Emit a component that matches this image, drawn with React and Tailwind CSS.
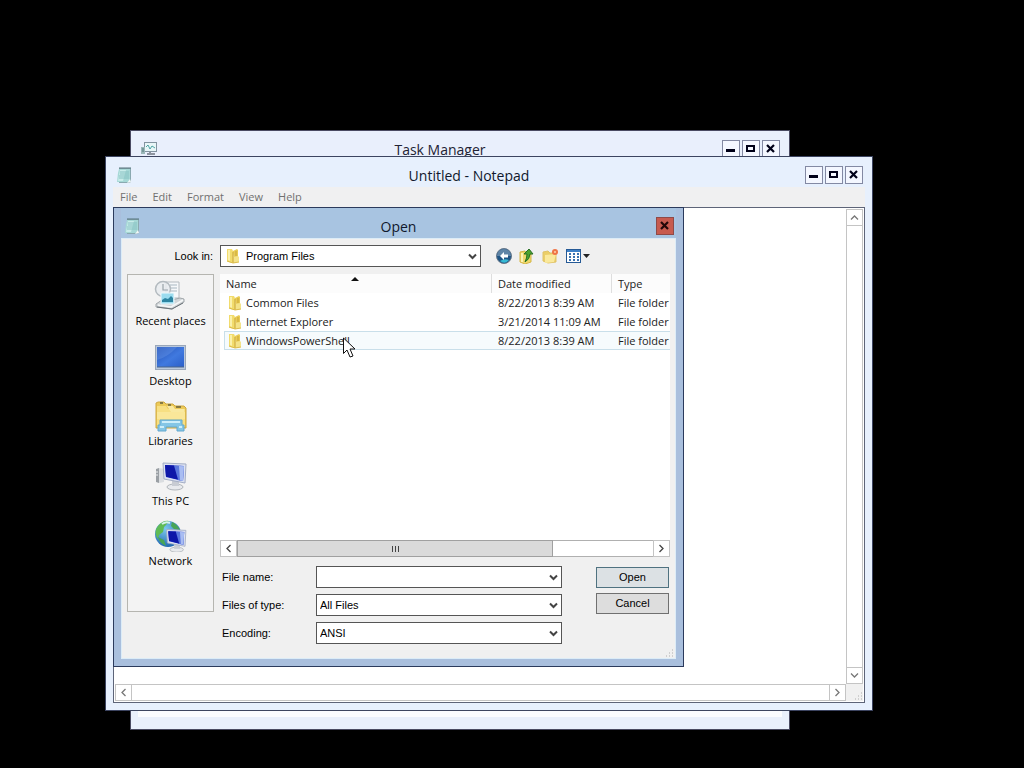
import React, { useState } from 'react';

const FILES = [
  { name: 'Common Files', modified: '8/22/2013 8:39 AM', type: 'File folder' },
  { name: 'Internet Explorer', modified: '3/21/2014 11:09 AM', type: 'File folder' },
  { name: 'WindowsPowerShell', modified: '8/22/2013 8:39 AM', type: 'File folder' },
];

const NotepadIcon = () => (
  <svg width="18" height="18" viewBox="0 0 18 18" className="shrink-0" aria-hidden="true">
    <path d="M4 2h12v14l-2 1H4z" fill="#8aa9b0" />
    <path d="M4 3h11v13H2l1-9z" fill="#a6d8d6" />
    <path d="M5 4h6L8 15H3z" fill="#c9ecea" />
    <path d="M5 6h9M5 8h9M4 10h10M4 12h10" stroke="#86c1c2" strokeWidth="1" />
    <path d="M5 1v2M7 1v2M9 1v2M11 1v2M13 1v2M15 1v2" stroke="#54727a" strokeWidth="1" />
    <path d="M12 17l3-4 1 3z" fill="#f4f8f8" />
  </svg>
);

const TaskManagerIcon = () => (
  <svg width="18" height="16" viewBox="0 0 18 16" className="shrink-0" aria-hidden="true">
    <rect x="4.5" y="1.5" width="12" height="9" fill="#e8f6f8" stroke="#8293a0" />
    <path d="M6 6l2-2 2 4 2-3 3 2" fill="none" stroke="#4da5a6" />
    <path d="M7 13h8M10 11v2" stroke="#8d949f" strokeWidth="2" />
    <path d="M1 6h4v7H1z" fill="#9ab7b8" />
    <path d="M2 8h2M2 10h2" stroke="#52777c" />
  </svg>
);

const FolderIcon = () => (
  <svg width="16" height="16" viewBox="0 0 16 16" className="shrink-0" aria-hidden="true">
    <path d="M2 1h5l1 2v12l-5-1-1-1z" fill="#f2dc6d" />
    <path d="M8 3l4-2 1 1v10l-4 3z" fill="#e9cc55" />
    <path d="M8 9l5-1 1 1v5l-4 1H8z" fill="#f4e38a" />
    <path d="M3 2h2v11l-2-1z" fill="#fbf1ac" />
    <path d="M8 4v11M11 3v5" stroke="#c9a437" />
    <path d="M2 13l6 2 6-1" fill="none" stroke="#ddbd4c" />
  </svg>
);

const RecentIcon = () => (
  <svg width="34" height="32" viewBox="0 0 34 32" aria-hidden="true">
    <path d="M12 2h13v16H12z" fill="#f6f8fa" stroke="#b4babf" />
    <path d="M16 5h7M17 8h6M17 11h6" stroke="#a8b7c1" />
    <circle cx="9" cy="9" r="7.5" fill="#e8ebee" fillOpacity=".85" stroke="#b3babf" strokeWidth="1.5" />
    <path d="M9 4v6h5" fill="none" stroke="#98a2a9" strokeWidth="1.2" />
    <path d="M2 24l6-4 6 1 12-3 4 1v3l-12 7-16-2z" fill="#d2d6d9" stroke="#a0a6aa" />
    <path d="M4 25l13 2 12-7" fill="none" stroke="#f6f8f8" strokeWidth="1.5" />
    <path d="M3 27l15 2 11-6" fill="none" stroke="#6b7378" />
    <path d="M7 13h13v11H7z" fill="#9bdcef" stroke="#eff8fb" />
    <path d="M8 20l3-2 3 1 3-3 2 2v4H8z" fill="#2d85a2" />
  </svg>
);

const DesktopIcon = () => (
  <svg width="34" height="32" viewBox="0 0 34 32" aria-hidden="true">
    <defs>
      <linearGradient id="desk" x1="0" y1="0" x2="1" y2="1">
        <stop offset="0" stopColor="#2350b4" />
        <stop offset=".55" stopColor="#4079df" />
        <stop offset="1" stopColor="#2b5fc9" />
      </linearGradient>
    </defs>
    <rect x="1.5" y="5.5" width="30" height="24" fill="#b9c8dc" stroke="#9aa7b9" />
    <rect x="3" y="7" width="27" height="20" fill="url(#desk)" />
    <path d="M3 7h20Q14 17 3 20z" fill="#6f9fec" fillOpacity=".35" />
    <path d="M3 27h27" stroke="#4a6488" />
  </svg>
);

const LibrariesIcon = () => (
  <svg width="34" height="32" viewBox="0 0 34 32" aria-hidden="true">
    <path d="M2 3l2-1h6l2 2h7l2 2h9l2 2v20H2z" fill="#ecca58" stroke="#cfa83f" />
    <path d="M3 6h9l2 3h17v18H3z" fill="#f7df82" />
    <path d="M13 6h6l2 3h9v3H17z" fill="#f9e9a1" />
    <path d="M6 3h3M14 5h3M22 7h5" stroke="#66623f" strokeWidth="1.5" />
    <path d="M3 12h28v7H3z" fill="#fae799" />
    <path d="M6 20h22v5h2v6h-7v-4H12v4H4v-6h2z" fill="#84c6e6" stroke="#62a8cf" />
    <path d="M8 22h18M6 27h4M25 27h3" fill="none" stroke="#cdeefa" strokeWidth="2" />
  </svg>
);

const Monitor = () => (
  <>
    <ellipse cx="21" cy="27" rx="8" ry="3" fill="#e8eaed" stroke="#b0b5ba" />
    <path d="M18 20h7v6h-7z" fill="#c8ccd3" />
    <path d="M9 3l23 1-1 19-21-4z" fill="#dce2f2" stroke="#a3adc4" />
    <path d="M11 5l19 1-1 15-17-4z" fill="#1a2bc4" />
    <path d="M18 5.500l12 .5-1 15-6-1z" fill="#5b78dd" />
    <path d="M25 6l5 .3-1 14.700-3-.5z" fill="#a9bdf2" />
    <path d="M11 5l9 .5 4 14-12-3z" fill="#0e17a8" />
  </>
);

const PcIcon = () => (
  <svg width="34" height="32" viewBox="0 0 34 32" aria-hidden="true">
    <path d="M2 9l3-1v15l-3-1z" fill="#9a9fa4" />
    <path d="M5 8l5 1v13l-5 1z" fill="#dadde0" />
    <path d="M2 12h2M2 15h2" stroke="#eceeef" />
    <Monitor />
  </svg>
);

const NetworkIcon = () => (
  <svg width="34" height="32" viewBox="0 0 34 32" aria-hidden="true">
    <defs>
      <radialGradient id="globe" cx=".4" cy=".3" r=".75">
        <stop offset="0" stopColor="#7cc9ee" />
        <stop offset="1" stopColor="#1c63ad" />
      </radialGradient>
    </defs>
    <circle cx="14" cy="14" r="13" fill="url(#globe)" />
    <path d="M4 6Q9 0 15 1l-3 4-2 2-1 5-4 3-1 4Q-1 12 4 6z" fill="#5fbb55" />
    <path d="M18 2q5 2 8 8l-6-1-3-3zM4 17l6 3 2 6Q5 23 4 17z" fill="#48a556" />
    <path d="M8 4q4-3 8-1" stroke="#d5f3ed" strokeWidth="2" fill="none" />
    <g transform="translate(5 7) scale(.84)">
      <Monitor />
    </g>
  </svg>
);

const BackIcon = () => (
  <svg width="16" height="16" viewBox="0 0 16 16" aria-hidden="true">
    <circle cx="8" cy="8" r="7.5" fill="#1f5585" stroke="#68798a" />
    <path d="M1 8a7 7 0 0 1 14 0z" fill="#5f84a6" />
    <path d="M4 13q4-3 9-1-4 5-9 1z" fill="#36bad4" />
    <path d="M8 4L4 8l4 4v-2.500h4v-3H8z" fill="#fff" />
  </svg>
);

const UpIcon = () => (
  <svg width="16" height="16" viewBox="0 0 16 16" aria-hidden="true">
    <path d="M1 4l5-1 1 2 5-1v10l-6 2-5-2z" fill="#efd86c" stroke="#d5b647" />
    <path d="M3 5v9" stroke="#fcf3b5" strokeWidth="2" />
    <path d="M10 1l4 5h-3q0 5-5 8 2-4 2-8H5z" fill="#4da32f" stroke="#286f24" />
  </svg>
);

const NewFolderIcon = () => (
  <svg width="17" height="16" viewBox="0 0 17 16" aria-hidden="true">
    <path d="M1 4l5-1 2 2h6v9l-8 1-5-2z" fill="#ebce67" stroke="#e0c368" />
    <path d="M3 7l11-1-2 8-9 1z" fill="#fae99c" />
    <circle cx="13" cy="4" r="3" fill="#ef7446" />
    <circle cx="13" cy="4" r="1" fill="#ffd2a8" />
  </svg>
);

const ViewIcon = () => (
  <svg width="25" height="16" viewBox="0 0 25 16" aria-hidden="true">
    <path d="M0 1h15v14H0z" fill="#265a96" />
    <path d="M1 4h13v10H1z" fill="#fff" />
    <path d="M1 2h13v2H1z" fill="#3f82c8" />
    <path d="M3 6h2M7 6h2M11 6h2M3 9h2M7 9h2M11 9h2M3 12h2M7 12h2M11 12h2" stroke="#3a73b0" strokeWidth="2" />
    <path d="M17 6h7l-3.5 4z" fill="#222" />
  </svg>
);

const Chevron = ({ rotate = '', color = '#444', bold = false }) => (
  <svg width="9" height="9" viewBox="0 0 9 9" className={rotate} aria-hidden="true">
    <path d="M1 2.5L4.5 6 8 2.5" fill="none" stroke={color} strokeWidth={bold ? 2 : 1.3} />
  </svg>
);

const Grip = () => (
  <svg width="9" height="9" viewBox="0 0 9 9" aria-hidden="true">
    <path d="M7 1h1M4 4h1M7 4h1M1 7h1M4 7h1M7 7h1" stroke="#c4c4c4" strokeWidth="1.5" />
  </svg>
);

const PLACES = [
  { label: 'Recent places', Icon: RecentIcon },
  { label: 'Desktop', Icon: DesktopIcon },
  { label: 'Libraries', Icon: LibrariesIcon },
  { label: 'This PC', Icon: PcIcon },
  { label: 'Network', Icon: NetworkIcon },
];

const WindowButtons = () => {
  const style = 'flex size-[18px] items-center justify-center border border-[#8389a3] bg-[#f4f7ff]';
  return (
    <div className="flex gap-[2px]">
      <button type="button" aria-label="Minimize" className={style}>
        <svg width="10" height="10" viewBox="0 0 10 10">
          <path d="M0 6.500h9" stroke="#000018" strokeWidth="3" />
        </svg>
      </button>
      <button type="button" aria-label="Maximize" className={style}>
        <svg width="10" height="10" viewBox="0 0 10 10">
          <path d="M0 1h9v7H0zM2 3v3h5V3z" fill="#000018" fillRule="evenodd" />
        </svg>
      </button>
      <button type="button" aria-label="Close" className={style}>
        <svg width="10" height="10" viewBox="0 0 10 10">
          <path d="M1 1l7 7M8 1L1 8" stroke="#000018" strokeWidth="2.2" />
        </svg>
      </button>
    </div>
  );
};

const ScrollButton = ({ label, rotate, color }) => (
  <button
    type="button"
    aria-label={label}
    className="flex size-[17px] shrink-0 items-center justify-center border border-[#c4c4c4] bg-white"
  >
    <Chevron rotate={rotate} color={color} />
  </button>
);

const SelectBox = ({ id, options }) => (
  <div className="relative">
    <select
      id={id}
      className="block h-[22px] w-full appearance-none border border-[#555] bg-white pr-5 pl-[3px] text-[11px] text-black"
    >
      {options.map((option) => (
        <option key={option}>{option}</option>
      ))}
    </select>
    <span className="pointer-events-none absolute inset-y-0 right-1 flex items-center">
      <Chevron bold />
    </span>
  </div>
);

const TaskManager = () => (
  <section className="absolute top-[130px] left-[130px] flex h-[600px] w-[660px] flex-col border border-[#4a4a62] bg-[#e9effc] px-[7px] pb-3">
    <header className="flex items-center px-[2px] pt-[7px]">
      <TaskManagerIcon />
      <h1 className="flex-1 pt-[2px] text-center text-[14px] leading-5 text-[#222233]">Task Manager</h1>
      <WindowButtons />
    </header>
    <div className="mt-2 flex-1 bg-[#fafbff]" />
  </section>
);

const Notepad = () => (
  <section className="absolute top-[156px] left-[105px] flex h-[555px] w-[768px] flex-col border border-[#3c4460] bg-[#e7f0fd] px-[7px] pb-[7px]">
    <header className="flex h-[30px] items-center px-[2px] pt-[6px]">
      <NotepadIcon />
      <h1 className="flex-1 pt-[2px] text-center text-[14px] leading-5 text-[#10182c]">Untitled - Notepad</h1>
      <WindowButtons />
    </header>
    <nav className="flex h-[20px] items-center gap-[15px] bg-[#f0f0f1] px-[7px] text-[11px] leading-4 text-[#707070]">
      {['File', 'Edit', 'Format', 'View', 'Help'].map((item) => (
        <button key={item} type="button">
          {item}
        </button>
      ))}
    </nav>
    <div className="flex flex-1 flex-col border border-[#5d6478] bg-white p-px">
      <div className="flex flex-1">
        <textarea aria-label="Document text" className="flex-1 resize-none outline-none" />
        <div className="flex w-[17px] flex-col border-x border-[#c4c4c4]">
          <div className="-mx-px">
            <ScrollButton label="Scroll up" rotate="rotate-180" color="#777" />
          </div>
          <div className="flex-1" />
          <div className="-mx-px">
            <ScrollButton label="Scroll down" rotate="" color="#777" />
          </div>
        </div>
      </div>
      <div className="flex">
        <div className="flex flex-1 justify-between border-y border-[#c4c4c4]">
          <div className="-my-px">
            <ScrollButton label="Scroll left" rotate="rotate-90" color="#777" />
          </div>
          <div className="-my-px">
            <ScrollButton label="Scroll right" rotate="-rotate-90" color="#777" />
          </div>
        </div>
        <div className="flex size-[17px] items-end justify-end bg-[#f0f0f0]">
          <Grip />
        </div>
      </div>
    </div>
  </section>
);

const FileList = () => (
  <div className="flex h-[283px] flex-col bg-white">
    <div className="flex-1">
      <table className="w-full table-fixed border-separate border-spacing-0 text-left text-[11px] leading-4 whitespace-nowrap text-[#222]">
        <colgroup>
          <col className="w-[4px]" />
          <col />
          <col className="w-[120px]" />
          <col className="w-[59px]" />
        </colgroup>
        <thead>
          <tr className="h-[19px] bg-[#fcfcfc]">
            <th />
            <th className="relative p-0 pl-[2px] font-normal">
              Name
              <svg width="8" height="4" viewBox="0 0 8 4" className="absolute top-[3px] left-[127px]" aria-hidden="true">
                <path d="M0 4l4-4 4 4z" fill="#111" />
              </svg>
            </th>
            <th className="border-l border-[#dedede] p-0 pl-[6px] font-normal">Date modified</th>
            <th className="border-l border-[#dedede] p-0 pl-[6px] font-normal">Type</th>
          </tr>
        </thead>
        <tbody>
          {FILES.map((file) => {
            const hot = file.name === 'WindowsPowerShell';
            return (
              <tr key={file.name} className="h-[19px]">
                <td />
                <td className={hot ? 'border-y border-l border-[#c9dfea] bg-[#f6fbfd] p-0' : 'p-0 pl-px'}>
                  <div className="flex items-center gap-[3px] pl-[2px]">
                    <FolderIcon />
                    {file.name}
                  </div>
                </td>
                <td className={hot ? 'border-y border-[#c9dfea] bg-[#f6fbfd] p-0 pl-[7px]' : 'p-0 pl-[7px]'}>
                  {file.modified}
                </td>
                <td className={hot ? 'border-y border-[#c9dfea] bg-[#f6fbfd] p-0 pl-[7px]' : 'p-0 pl-[7px]'}>
                  {file.type}
                </td>
              </tr>
            );
          })}
        </tbody>
      </table>
    </div>
    <div className="flex h-[17px] border-y border-[#b0b0b0]">
      <div className="-my-px">
        <ScrollButton label="Scroll list left" rotate="rotate-90" />
      </div>
      <div className="-my-px flex w-[316px] items-center justify-center gap-[2px] border border-[#a0a0a0] bg-[#dadada]">
        <span className="h-[6px] w-px bg-[#444]" />
        <span className="h-[6px] w-px bg-[#444]" />
        <span className="h-[6px] w-px bg-[#444]" />
      </div>
      <div className="flex-1" />
      <div className="-my-px">
        <ScrollButton label="Scroll list right" rotate="-rotate-90" />
      </div>
    </div>
  </div>
);

const OpenDialog = () => {
  const [fileName, setFileName] = useState('');

  return (
    <section
      role="dialog"
      aria-labelledby="open-title"
      className="absolute top-[207px] left-[113px] flex h-[460px] w-[571px] flex-col border border-[#2b3a5c] bg-[#a9bfdd] px-[7px] pb-[7px]"
    >
      <header className="grid h-[30px] grid-cols-[1fr_auto_1fr] items-center bg-[#a8c4e1] px-[2px] pt-[6px]">
        <NotepadIcon />
        <h1 id="open-title" className="pt-[2px] text-[14px] leading-5 text-[#10182c]">
          Open
        </h1>
        <button
          type="button"
          aria-label="Close dialog"
          className="flex size-[18px] items-center justify-center justify-self-end border border-[#8f4a48] bg-[#c75b4f]"
        >
          <svg width="10" height="10" viewBox="0 0 10 10">
            <path d="M1 1l7 7M8 1L1 8" stroke="#240808" strokeWidth="2.2" />
          </svg>
        </button>
      </header>

      <div className="flex flex-1 flex-col border border-[#dcecf7] bg-[#f0f0f0] px-[5px] pt-[6px]">
        <div className="flex items-center font-[Liberation_Sans,sans-serif] text-[11px]">
          <label htmlFor="look-in" className="w-[93px] pr-[7px] text-right">
            Look in:
          </label>
          <div className="relative w-[261px]">
            <select
              id="look-in"
              className="block h-[22px] w-full appearance-none border border-[#555] bg-white pr-5 pl-[25px] text-[11px]"
            >
              <option>Program Files</option>
            </select>
            <span className="pointer-events-none absolute inset-y-0 left-[5px] flex items-center">
              <FolderIcon />
            </span>
            <span className="pointer-events-none absolute inset-y-0 right-1 flex items-center">
              <Chevron bold />
            </span>
          </div>
          <div className="ml-[15px] flex gap-[7px]">
            <button type="button" aria-label="Back">
              <BackIcon />
            </button>
            <button type="button" aria-label="Up one level">
              <UpIcon />
            </button>
            <button type="button" aria-label="New folder">
              <NewFolderIcon />
            </button>
            <button type="button" aria-label="View menu">
              <ViewIcon />
            </button>
          </div>
        </div>

        <div className="mt-[7px] flex gap-[6px]">
          <nav className="flex h-[338px] w-[87px] shrink-0 flex-col border border-[#b5b5b0] bg-[#f3f3f3] pt-[5px]">
            {PLACES.map(({ label, Icon }) => (
              <button
                key={label}
                type="button"
                className="flex h-[60px] flex-col items-center text-[11px] leading-4 whitespace-nowrap"
              >
                <Icon />
                <span className="pt-px">{label}</span>
              </button>
            ))}
          </nav>

          <div className="flex min-w-0 flex-1 flex-col">
            <FileList />
            <div className="mt-[9px] flex justify-between pr-px pl-[2px] font-[Liberation_Sans,sans-serif] text-[11px]">
              <div className="grid grid-cols-[94px_246px] items-center gap-y-[6px]">
                <label htmlFor="file-name">File name:</label>
                <div className="relative">
                  <input
                    id="file-name"
                    value={fileName}
                    onChange={(e) => setFileName(e.target.value)}
                    className="block h-[22px] w-full border border-[#555] bg-white pr-5 pl-[3px] outline-none"
                  />
                  <button type="button" aria-label="Recent names" className="absolute inset-y-0 right-1">
                    <Chevron bold />
                  </button>
                </div>
                <label htmlFor="file-type">Files of type:</label>
                <SelectBox id="file-type" options={['All Files', 'Text Documents (*.txt)']} />
                <label htmlFor="encoding">Encoding:</label>
                <SelectBox id="encoding" options={['ANSI', 'Unicode', 'UTF-8']} />
              </div>
              <div className="flex w-[73px] flex-col gap-[5px] pt-px">
                <button type="button" className="h-[21px] border border-[#4f7280] bg-[#dce1e4]">
                  Open
                </button>
                <button type="button" className="h-[21px] border border-[#707070] bg-[#dddddd]">
                  Cancel
                </button>
              </div>
            </div>
          </div>
        </div>
        <div className="mt-auto -mr-[4px] self-end">
          <Grip />
        </div>
      </div>
    </section>
  );
};

const Cursor = () => (
  <svg width="13" height="21" viewBox="0 0 13 21" className="absolute top-[337px] left-[343px]" aria-hidden="true">
    <path d="M.5 1v15.500l3.500-3.500 3 7 3-1-3-7h5z" fill="#fff" stroke="#111" />
  </svg>
);

export default function App() {
  return (
    <main className="relative h-screen w-full overflow-hidden bg-black font-[Open_Sans,Noto_Sans,sans-serif]">
      <TaskManager />
      <Notepad />
      <OpenDialog />
      <Cursor />
    </main>
  );
}
